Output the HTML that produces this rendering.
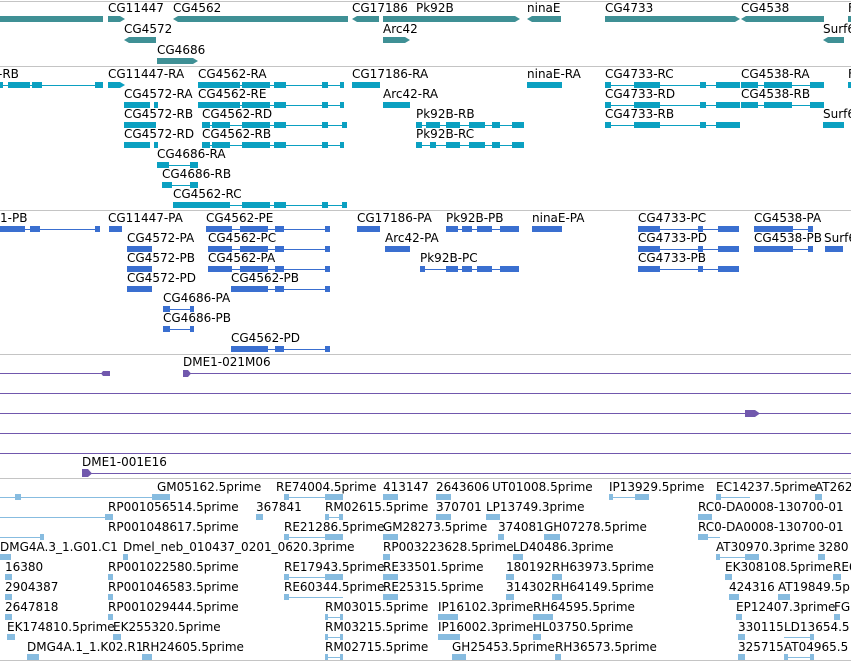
<!DOCTYPE html>
<html><head><meta charset="utf-8"><style>
html,body{margin:0;padding:0;background:#fff;width:851px;height:662px;overflow:hidden;position:relative}
svg{position:absolute;left:0;top:0}
.t{position:absolute;font:12px "DejaVu Sans",sans-serif;line-height:14px;white-space:nowrap;color:#000}
</style></head><body>
<svg width="851" height="662">
<g fill="#c4c4c4">
<rect x="0" y="1" width="851" height="1"/><rect x="0" y="66" width="851" height="1"/><rect x="0" y="210" width="851" height="1"/><rect x="0" y="354" width="851" height="1"/><rect x="0" y="478" width="851" height="1"/><rect x="0" y="660" width="851" height="1"/>
</g>
<!-- genes -->
<g fill="#3f9095">
<rect x="0" y="16" width="103" height="6"/>
<path d="M108 16H120L125 19L120 22H108Z"/>
<path d="M178 16H348V22H178L173 19Z"/>
<path d="M357 16H379V22H357L352 19Z"/>
<path d="M383 16H515L520 19L515 22H383Z"/>
<path d="M532 16H561V22H532L527 19Z"/>
<path d="M605 16H735L740 19L735 22H605Z"/>
<path d="M746 16H824V22H746L741 19Z"/>
<rect x="848" y="16" width="3" height="6"/>
<path d="M129 37H156V43H129L124 40Z"/>
<path d="M383 37H405L410 40L405 43H383Z"/>
<path d="M828 37H844V43H828L823 40Z"/>
<path d="M157 58H193L198 61L193 64H157Z"/>
</g>
<!-- transcripts -->
<g fill="#0ba0c1">
<rect x="0" y="85" width="103" height="1"/><rect x="0" y="82" width="3" height="6"/><rect x="8" y="82" width="22" height="6"/><rect x="32" y="82" width="10" height="6"/><rect x="95" y="82" width="8" height="6"/>
<path d="M108 82H120L125 85L120 88H108Z"/>
<rect x="198" y="85" width="146" height="1"/><rect x="198" y="82" width="42" height="6"/><rect x="242" y="82" width="28" height="6"/><rect x="274" y="82" width="12" height="6"/><rect x="322" y="82" width="6" height="6"/><rect x="340" y="82" width="4" height="6"/>
<rect x="352" y="82" width="28" height="6"/>
<rect x="527" y="82" width="35" height="6"/>
<rect x="605" y="85" width="135" height="1"/><rect x="605" y="82" width="6" height="6"/><rect x="634" y="82" width="26" height="6"/><rect x="700" y="82" width="6" height="6"/><rect x="716" y="82" width="24" height="6"/>
<rect x="741" y="85" width="83" height="1"/><rect x="741" y="82" width="17" height="6"/><rect x="764" y="82" width="28" height="6"/><rect x="810" y="82" width="14" height="6"/>
<rect x="848" y="82" width="3" height="6"/>

<rect x="124" y="102" width="26" height="6"/><rect x="154" y="102" width="4" height="6"/>
<rect x="198" y="105" width="146" height="1"/><rect x="198" y="102" width="42" height="6"/><rect x="242" y="102" width="28" height="6"/><rect x="274" y="102" width="12" height="6"/><rect x="322" y="102" width="6" height="6"/><rect x="340" y="102" width="4" height="6"/>
<rect x="383" y="102" width="27" height="6"/>
<rect x="605" y="105" width="135" height="1"/><rect x="605" y="102" width="6" height="6"/><rect x="634" y="102" width="26" height="6"/><rect x="700" y="102" width="6" height="6"/><rect x="716" y="102" width="24" height="6"/>
<rect x="741" y="105" width="83" height="1"/><rect x="741" y="102" width="17" height="6"/><rect x="764" y="102" width="28" height="6"/><rect x="810" y="102" width="14" height="6"/>

<rect x="124" y="122" width="32" height="6"/>
<rect x="202" y="125" width="145" height="1"/><rect x="202" y="122" width="8" height="6"/><rect x="212" y="122" width="18" height="6"/><rect x="242" y="122" width="28" height="6"/><rect x="274" y="122" width="12" height="6"/><rect x="322" y="122" width="6" height="6"/><rect x="342" y="122" width="5" height="6"/>
<rect x="416" y="125" width="108" height="1"/><rect x="416" y="122" width="6" height="6"/><rect x="426" y="122" width="14" height="6"/><rect x="446" y="122" width="14" height="6"/><rect x="469" y="122" width="16" height="6"/><rect x="492" y="122" width="8" height="6"/><rect x="512" y="122" width="12" height="6"/>
<rect x="605" y="125" width="135" height="1"/><rect x="605" y="122" width="6" height="6"/><rect x="634" y="122" width="26" height="6"/><rect x="700" y="122" width="6" height="6"/><rect x="716" y="122" width="24" height="6"/>
<rect x="823" y="122" width="21" height="6"/>

<rect x="124" y="142" width="26" height="6"/><rect x="154" y="142" width="4" height="6"/>
<rect x="202" y="145" width="142" height="1"/><rect x="202" y="142" width="8" height="6"/><rect x="212" y="142" width="18" height="6"/><rect x="242" y="142" width="28" height="6"/><rect x="274" y="142" width="12" height="6"/><rect x="322" y="142" width="6" height="6"/><rect x="340" y="142" width="4" height="6"/>
<rect x="416" y="145" width="108" height="1"/><rect x="416" y="142" width="6" height="6"/><rect x="430" y="142" width="6" height="6"/><rect x="446" y="142" width="14" height="6"/><rect x="469" y="142" width="16" height="6"/><rect x="492" y="142" width="8" height="6"/><rect x="512" y="142" width="12" height="6"/>

<rect x="157" y="165" width="41" height="1"/><rect x="157" y="162" width="12" height="6"/><rect x="190" y="162" width="8" height="6"/>
<rect x="162" y="185" width="36" height="1"/><rect x="162" y="182" width="10" height="6"/><rect x="190" y="182" width="8" height="6"/>
<rect x="173" y="205" width="174" height="1"/><rect x="173" y="202" width="57" height="6"/><rect x="242" y="202" width="28" height="6"/><rect x="274" y="202" width="12" height="6"/><rect x="322" y="202" width="6" height="6"/><rect x="342" y="202" width="5" height="6"/>
</g>
<!-- proteins -->
<g fill="#3a6fd0">
<rect x="0" y="229" width="100" height="1"/><rect x="0" y="226" width="25" height="6"/><rect x="30" y="226" width="10" height="6"/><rect x="95" y="226" width="5" height="6"/>
<rect x="109" y="226" width="13" height="6"/>
<rect x="206" y="229" width="124" height="1"/><rect x="206" y="226" width="26" height="6"/><rect x="240" y="226" width="28" height="6"/><rect x="275" y="226" width="9" height="6"/><rect x="325" y="226" width="5" height="6"/>
<rect x="357" y="226" width="23" height="6"/>
<rect x="446" y="229" width="73" height="1"/><rect x="446" y="226" width="12" height="6"/><rect x="462" y="226" width="10" height="6"/><rect x="477" y="226" width="15" height="6"/><rect x="500" y="226" width="19" height="6"/>
<rect x="532" y="226" width="30" height="6"/>
<rect x="638" y="229" width="101" height="1"/><rect x="638" y="226" width="22" height="6"/><rect x="698" y="226" width="5" height="6"/><rect x="718" y="226" width="21" height="6"/>
<rect x="754" y="229" width="59" height="1"/><rect x="754" y="226" width="39" height="6"/><rect x="808" y="226" width="5" height="6"/>

<rect x="127" y="246" width="25" height="6"/>
<rect x="208" y="249" width="122" height="1"/><rect x="208" y="246" width="24" height="6"/><rect x="240" y="246" width="28" height="6"/><rect x="275" y="246" width="9" height="6"/><rect x="325" y="246" width="5" height="6"/>
<rect x="385" y="246" width="25" height="6"/>
<rect x="638" y="249" width="101" height="1"/><rect x="638" y="246" width="22" height="6"/><rect x="698" y="246" width="5" height="6"/><rect x="718" y="246" width="21" height="6"/>
<rect x="754" y="249" width="59" height="1"/><rect x="754" y="246" width="39" height="6"/><rect x="808" y="246" width="5" height="6"/>
<rect x="825" y="246" width="18" height="6"/>

<rect x="127" y="266" width="25" height="6"/>
<rect x="208" y="269" width="122" height="1"/><rect x="208" y="266" width="24" height="6"/><rect x="240" y="266" width="28" height="6"/><rect x="275" y="266" width="9" height="6"/><rect x="325" y="266" width="5" height="6"/>
<rect x="420" y="269" width="99" height="1"/><rect x="420" y="266" width="5" height="6"/><rect x="446" y="266" width="12" height="6"/><rect x="462" y="266" width="10" height="6"/><rect x="477" y="266" width="15" height="6"/><rect x="500" y="266" width="19" height="6"/>
<rect x="638" y="269" width="101" height="1"/><rect x="638" y="266" width="22" height="6"/><rect x="698" y="266" width="5" height="6"/><rect x="718" y="266" width="21" height="6"/>

<rect x="127" y="286" width="25" height="6"/>
<rect x="231" y="289" width="99" height="1"/><rect x="231" y="286" width="37" height="6"/><rect x="275" y="286" width="9" height="6"/><rect x="325" y="286" width="5" height="6"/>
<rect x="163" y="309" width="31" height="1"/><rect x="163" y="306" width="7" height="6"/><rect x="190" y="306" width="4" height="6"/>
<rect x="163" y="329" width="31" height="1"/><rect x="163" y="326" width="7" height="6"/><rect x="190" y="326" width="4" height="6"/>
<rect x="231" y="349" width="99" height="1"/><rect x="231" y="346" width="37" height="6"/><rect x="275" y="346" width="9" height="6"/><rect x="325" y="346" width="5" height="6"/>
</g>
<!-- clones -->
<g fill="#7158ad">
<rect x="0" y="373" width="108" height="1"/><path d="M103 371H110V376H103L101 373.5Z"/>
<rect x="183" y="373" width="668" height="1"/><path d="M183 370H188L191 373.5L188 377H183Z"/>
<rect x="0" y="393" width="851" height="1"/>
<rect x="0" y="413" width="851" height="1"/><path d="M745 410H755L760 413.5L755 417H745Z"/>
<rect x="0" y="433" width="851" height="1"/>
<rect x="0" y="453" width="851" height="1"/>
<rect x="82" y="473" width="769" height="1"/><path d="M82 469H88L92 473.5L88 477H82Z"/>
</g>
<!-- ESTs -->
<g fill="#87bce0">
<rect x="0" y="497" width="170" height="1"/><rect x="15" y="494" width="6" height="6"/><rect x="152" y="494" width="18" height="6"/>
<rect x="284" y="497" width="59" height="1"/><rect x="284" y="494" width="5" height="6"/><rect x="325" y="494" width="18" height="6"/>
<rect x="383" y="494" width="15" height="6"/><rect x="436" y="494" width="15" height="6"/>
<rect x="609" y="497" width="40" height="1"/><rect x="609" y="494" width="4" height="6"/><rect x="635" y="494" width="14" height="6"/>
<rect x="716" y="497" width="34" height="1"/><rect x="716" y="494" width="5" height="6"/><rect x="815" y="494" width="7" height="6"/>

<rect x="0" y="517" width="113" height="1"/><rect x="105" y="514" width="8" height="6"/><rect x="256" y="514" width="7" height="6"/>
<rect x="325" y="517" width="18" height="1"/><rect x="325" y="514" width="4" height="6"/><rect x="339" y="514" width="4" height="6"/>
<rect x="436" y="514" width="15" height="6"/><rect x="486" y="514" width="14" height="6"/><rect x="698" y="514" width="14" height="6"/>

<rect x="0" y="537" width="43" height="1"/><rect x="40" y="534" width="4" height="6"/>
<rect x="284" y="537" width="59" height="1"/><rect x="284" y="534" width="5" height="6"/><rect x="325" y="534" width="18" height="6"/>
<rect x="383" y="534" width="15" height="6"/><rect x="498" y="534" width="6" height="6"/><rect x="544" y="534" width="16" height="6"/>
<rect x="698" y="537" width="22" height="1"/><rect x="698" y="534" width="10" height="6"/>

<rect x="0" y="554" width="11" height="6"/><rect x="123" y="554" width="5" height="6"/><rect x="383" y="554" width="7" height="6"/><rect x="513" y="554" width="10" height="6"/>
<rect x="716" y="557" width="43" height="1"/><rect x="716" y="554" width="4" height="6"/><rect x="745" y="554" width="14" height="6"/><rect x="818" y="554" width="7" height="6"/>

<rect x="5" y="574" width="7" height="6"/><rect x="108" y="574" width="5" height="6"/>
<rect x="284" y="577" width="59" height="1"/><rect x="284" y="574" width="5" height="6"/><rect x="325" y="574" width="18" height="6"/>
<rect x="383" y="574" width="15" height="6"/><rect x="506" y="574" width="8" height="6"/><rect x="552" y="574" width="10" height="6"/><rect x="725" y="574" width="7" height="6"/><rect x="833" y="574" width="8" height="6"/>

<rect x="5" y="594" width="7" height="6"/><rect x="108" y="594" width="5" height="6"/>
<rect x="284" y="597" width="59" height="1"/><rect x="284" y="594" width="5" height="6"/>
<rect x="383" y="594" width="15" height="6"/><rect x="506" y="594" width="8" height="6"/><rect x="552" y="594" width="10" height="6"/><rect x="729" y="594" width="10" height="6"/><rect x="778" y="594" width="12" height="6"/>

<rect x="5" y="614" width="7" height="6"/><rect x="108" y="614" width="5" height="6"/>
<rect x="325" y="617" width="18" height="1"/><rect x="325" y="614" width="3" height="6"/><rect x="340" y="614" width="3" height="6"/>
<rect x="438" y="614" width="20" height="6"/><rect x="533" y="614" width="20" height="6"/><rect x="736" y="614" width="6" height="6"/><rect x="834" y="614" width="6" height="6"/>

<rect x="7" y="634" width="8" height="6"/><rect x="113" y="634" width="8" height="6"/>
<rect x="325" y="637" width="18" height="1"/><rect x="325" y="634" width="3" height="6"/><rect x="340" y="634" width="3" height="6"/>
<rect x="438" y="634" width="22" height="6"/><rect x="533" y="634" width="8" height="6"/><rect x="738" y="634" width="7" height="6"/>
<rect x="784" y="637" width="30" height="1"/><rect x="810" y="634" width="4" height="6"/>

<rect x="27" y="654" width="12" height="6"/><rect x="142" y="654" width="10" height="6"/>
<rect x="325" y="657" width="18" height="1"/><rect x="325" y="654" width="3" height="6"/><rect x="340" y="654" width="3" height="6"/>
<rect x="452" y="654" width="14" height="6"/><rect x="555" y="654" width="6" height="6"/><rect x="738" y="654" width="7" height="6"/>
<rect x="784" y="657" width="30" height="1"/><rect x="784" y="654" width="4" height="6"/><rect x="810" y="654" width="4" height="6"/>
</g>
</svg>

<!-- gene labels -->
<div class="t" style="left:108px;top:1px">CG11447</div>
<div class="t" style="left:173px;top:1px">CG4562</div>
<div class="t" style="left:352px;top:1px">CG17186</div>
<div class="t" style="left:416px;top:1px">Pk92B</div>
<div class="t" style="left:527px;top:1px">ninaE</div>
<div class="t" style="left:605px;top:1px">CG4733</div>
<div class="t" style="left:741px;top:1px">CG4538</div>
<div class="t" style="left:848px;top:1px">F</div>
<div class="t" style="left:124px;top:22px">CG4572</div>
<div class="t" style="left:383px;top:22px">Arc42</div>
<div class="t" style="left:823px;top:22px">Surf6</div>
<div class="t" style="left:157px;top:43px">CG4686</div>

<!-- transcript labels -->
<div class="t" style="left:-2px;top:67px">-RB</div>
<div class="t" style="left:108px;top:67px">CG11447-RA</div>
<div class="t" style="left:198px;top:67px">CG4562-RA</div>
<div class="t" style="left:352px;top:67px">CG17186-RA</div>
<div class="t" style="left:527px;top:67px">ninaE-RA</div>
<div class="t" style="left:605px;top:67px">CG4733-RC</div>
<div class="t" style="left:741px;top:67px">CG4538-RA</div>
<div class="t" style="left:848px;top:67px">F</div>
<div class="t" style="left:124px;top:87px">CG4572-RA</div>
<div class="t" style="left:198px;top:87px">CG4562-RE</div>
<div class="t" style="left:383px;top:87px">Arc42-RA</div>
<div class="t" style="left:605px;top:87px">CG4733-RD</div>
<div class="t" style="left:741px;top:87px">CG4538-RB</div>
<div class="t" style="left:124px;top:107px">CG4572-RB</div>
<div class="t" style="left:202px;top:107px">CG4562-RD</div>
<div class="t" style="left:416px;top:107px">Pk92B-RB</div>
<div class="t" style="left:605px;top:107px">CG4733-RB</div>
<div class="t" style="left:823px;top:107px">Surf6</div>
<div class="t" style="left:124px;top:127px">CG4572-RD</div>
<div class="t" style="left:202px;top:127px">CG4562-RB</div>
<div class="t" style="left:416px;top:127px">Pk92B-RC</div>
<div class="t" style="left:157px;top:147px">CG4686-RA</div>
<div class="t" style="left:162px;top:167px">CG4686-RB</div>
<div class="t" style="left:173px;top:187px">CG4562-RC</div>

<!-- protein labels -->
<div class="t" style="left:0px;top:211px">1-PB</div>
<div class="t" style="left:108px;top:211px">CG11447-PA</div>
<div class="t" style="left:206px;top:211px">CG4562-PE</div>
<div class="t" style="left:357px;top:211px">CG17186-PA</div>
<div class="t" style="left:446px;top:211px">Pk92B-PB</div>
<div class="t" style="left:532px;top:211px">ninaE-PA</div>
<div class="t" style="left:638px;top:211px">CG4733-PC</div>
<div class="t" style="left:754px;top:211px">CG4538-PA</div>
<div class="t" style="left:127px;top:231px">CG4572-PA</div>
<div class="t" style="left:208px;top:231px">CG4562-PC</div>
<div class="t" style="left:385px;top:231px">Arc42-PA</div>
<div class="t" style="left:638px;top:231px">CG4733-PD</div>
<div class="t" style="left:754px;top:231px">CG4538-PB</div>
<div class="t" style="left:824px;top:231px">Surf6</div>
<div class="t" style="left:127px;top:251px">CG4572-PB</div>
<div class="t" style="left:208px;top:251px">CG4562-PA</div>
<div class="t" style="left:420px;top:251px">Pk92B-PC</div>
<div class="t" style="left:638px;top:251px">CG4733-PB</div>
<div class="t" style="left:127px;top:271px">CG4572-PD</div>
<div class="t" style="left:231px;top:271px">CG4562-PB</div>
<div class="t" style="left:163px;top:291px">CG4686-PA</div>
<div class="t" style="left:163px;top:311px">CG4686-PB</div>
<div class="t" style="left:231px;top:331px">CG4562-PD</div>

<div class="t" style="left:183px;top:355px">DME1-021M06</div>
<div class="t" style="left:82px;top:455px">DME1-001E16</div>

<!-- EST labels -->
<div class="t" style="left:157px;top:480px">GM05162.5prime</div>
<div class="t" style="left:276px;top:480px">RE74004.5prime</div>
<div class="t" style="left:383px;top:480px">413147</div>
<div class="t" style="left:436px;top:480px">2643606</div>
<div class="t" style="left:492px;top:480px">UT01008.5prime</div>
<div class="t" style="left:609px;top:480px">IP13929.5prime</div>
<div class="t" style="left:716px;top:480px">EC14237.5prime</div>
<div class="t" style="left:815px;top:480px">AT262</div>

<div class="t" style="left:108px;top:500px">RP001056514.5prime</div>
<div class="t" style="left:256px;top:500px">367841</div>
<div class="t" style="left:325px;top:500px">RM02615.5prime</div>
<div class="t" style="left:436px;top:500px">370701</div>
<div class="t" style="left:486px;top:500px">LP13749.3prime</div>
<div class="t" style="left:698px;top:500px">RC0-DA0008-130700-01</div>

<div class="t" style="left:108px;top:520px">RP001048617.5prime</div>
<div class="t" style="left:284px;top:520px">RE21286.5prime</div>
<div class="t" style="left:383px;top:520px">GM28273.5prime</div>
<div class="t" style="left:498px;top:520px">374081</div>
<div class="t" style="left:544px;top:520px">GH07278.5prime</div>
<div class="t" style="left:698px;top:520px">RC0-DA0008-130700-01</div>

<div class="t" style="left:0px;top:540px">DMG4A.3_1.G01.C1</div>
<div class="t" style="left:123px;top:540px">Dmel_neb_010437_0201_0620.3prime</div>
<div class="t" style="left:383px;top:540px">RP003223628.5prime</div>
<div class="t" style="left:513px;top:540px">LD40486.3prime</div>
<div class="t" style="left:716px;top:540px">AT30970.3prime</div>
<div class="t" style="left:818px;top:540px">3280</div>

<div class="t" style="left:5px;top:560px">16380</div>
<div class="t" style="left:108px;top:560px">RP001022580.5prime</div>
<div class="t" style="left:284px;top:560px">RE17943.5prime</div>
<div class="t" style="left:383px;top:560px">RE33501.5prime</div>
<div class="t" style="left:506px;top:560px">180192</div>
<div class="t" style="left:552px;top:560px">RH63973.5prime</div>
<div class="t" style="left:725px;top:560px">EK308108.5prime</div>
<div class="t" style="left:833px;top:560px">RE6</div>

<div class="t" style="left:5px;top:580px">2904387</div>
<div class="t" style="left:108px;top:580px">RP001046583.5prime</div>
<div class="t" style="left:284px;top:580px">RE60344.5prime</div>
<div class="t" style="left:383px;top:580px">RE25315.5prime</div>
<div class="t" style="left:506px;top:580px">314302</div>
<div class="t" style="left:552px;top:580px">RH64149.5prime</div>
<div class="t" style="left:729px;top:580px">424316</div>
<div class="t" style="left:778px;top:580px">AT19849.5p</div>

<div class="t" style="left:5px;top:600px">2647818</div>
<div class="t" style="left:108px;top:600px">RP001029444.5prime</div>
<div class="t" style="left:325px;top:600px">RM03015.5prime</div>
<div class="t" style="left:438px;top:600px">IP16102.3prime</div>
<div class="t" style="left:533px;top:600px">RH64595.5prime</div>
<div class="t" style="left:736px;top:600px">EP12407.3prime</div>
<div class="t" style="left:834px;top:600px">FGI</div>

<div class="t" style="left:7px;top:620px">EK174810.5prime</div>
<div class="t" style="left:113px;top:620px">EK255320.5prime</div>
<div class="t" style="left:325px;top:620px">RM03215.5prime</div>
<div class="t" style="left:438px;top:620px">IP16002.3prime</div>
<div class="t" style="left:533px;top:620px">HL03750.5prime</div>
<div class="t" style="left:738px;top:620px">330115</div>
<div class="t" style="left:784px;top:620px">LD13654.5</div>

<div class="t" style="left:27px;top:640px">DMG4A.1_1.K02.R1</div>
<div class="t" style="left:142px;top:640px">RH24605.5prime</div>
<div class="t" style="left:325px;top:640px">RM02715.5prime</div>
<div class="t" style="left:452px;top:640px">GH25453.5prime</div>
<div class="t" style="left:555px;top:640px">RH36573.5prime</div>
<div class="t" style="left:738px;top:640px">325715</div>
<div class="t" style="left:784px;top:640px">AT04965.5</div>
</body></html>
